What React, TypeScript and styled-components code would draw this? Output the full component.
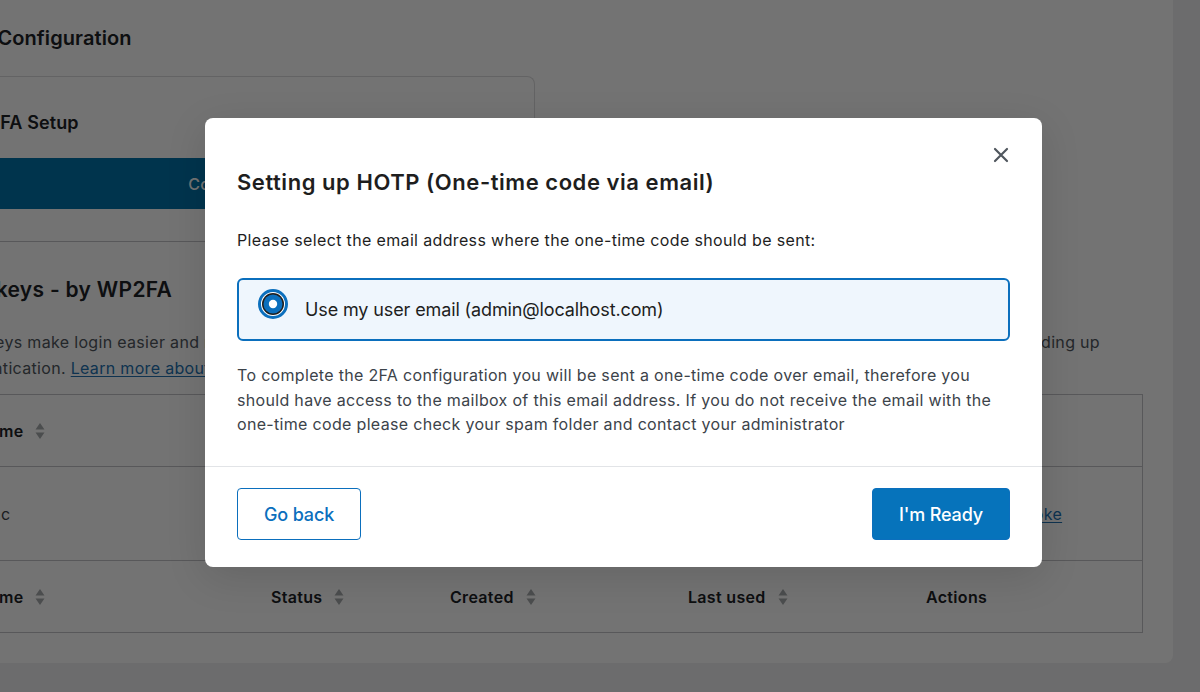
import React from "react";
import styled, { createGlobalStyle } from "styled-components";

const GlobalStyle = createGlobalStyle`
  html, body { margin: 0; padding: 0; }
  body {
    background: #f0f0f1;
    font-family: Inter, "Noto Sans", "Liberation Sans", sans-serif;
    letter-spacing: 0.32px;
    overflow: hidden;
    -webkit-font-smoothing: antialiased;
  }
  * { box-sizing: border-box; }
`;

const Page = styled.div`
  position: relative;
  height: 692px;
  overflow: hidden;
`;

const Panel = styled.main`
  margin: -16px 27px 0 -90px;
  padding: 40px 30px 30px 45px;
  background: #ffffff;
  border-radius: 0 8px 8px 0;
  color: #1d2327;
`;

const PageTitle = styled.h1`
  margin: 0;
  font-size: 20px;
  line-height: 28px;
  font-weight: 600;
  letter-spacing: 0.1px;
  color: #1d2327;
`;

const Card = styled.section`
  margin-top: 24px;
  width: 580px;
  border: 1px solid #dcdcde;
  border-bottom-color: #c3c4c7;
  border-radius: 0 8px 0 0;
  padding-bottom: 32px;
`;

const CardTitle = styled.h2`
  margin: 0;
  padding: 33px 33px 0;
  font-size: 18px;
  line-height: 26px;
  font-weight: 600;
  letter-spacing: 0.1px;
`;

const Bar = styled.div`
  margin-top: 22px;
  height: 51px;
  background: #0073aa;
  color: #ffffff;
  display: flex;
  align-items: center;
  justify-content: center;
  font-size: 16px;
  font-weight: 500;
`;

const SectionTitle = styled.h2`
  margin: 34px 0 0 -9px;
  font-size: 21px;
  line-height: 28px;
  font-weight: 600;
  letter-spacing: 0.3px;
`;

const Desc = styled.div`
  margin: 25px 0 0 -6px;
  font-size: 16px;
  line-height: 26px;
  color: #50575e;
`;

const DescLine = styled.div`
  display: flex;
  justify-content: space-between;
  padding-right: 43px;
  white-space: nowrap;
`;

const Link = styled.a`
  color: #2271b1;
  text-decoration: underline;
  text-underline-offset: 2px;
`;

const Table = styled.div`
  margin-top: 13px;
  border: 1px solid #c3c4c7;
`;

const Row = styled.div<{ $h: number; $last?: boolean }>`
  display: grid;
  grid-template-columns: 294px 179px 238px 238px 1fr;
  height: ${(p) => p.$h}px;
  border-bottom: ${(p) => (p.$last ? "none" : "1px solid #c3c4c7")};
  align-items: center;
`;

const HeadCell = styled.div`
  display: flex;
  align-items: center;
  gap: 12px;
  padding: 0 21px;
  font-size: 16px;
  font-weight: 600;
  color: #1d2327;
`;

const Cell = styled.div`
  display: flex;
  align-items: center;
  gap: 16px;
  padding: 0 21px;
  font-size: 16px;
  color: #3c434a;
`;

const SortIcon = () => (
  <svg width="10" height="20" viewBox="0 0 10 20" aria-hidden>
    <path d="M0.5 8.5 L5 2 L9.5 8.5 Z" fill="#a7aaad" />
    <path d="M0.5 11.5 L9.5 11.5 L5 18 Z" fill="#a7aaad" />
  </svg>
);

const Overlay = styled.div`
  position: absolute;
  inset: 0;
  background: rgba(0, 0, 0, 0.55);
  display: flex;
  align-items: flex-start;
  justify-content: center;
  padding: 118px 0 0 47px;
`;

const Modal = styled.div`
  position: relative;
  width: 837px;
  background: #ffffff;
  border-radius: 8px;
  box-shadow: 0 10px 40px rgba(0, 0, 0, 0.12);
  color: #1e1e1e;
`;

const CloseButton = styled.button`
  position: absolute;
  top: 25px;
  right: 29px;
  width: 24px;
  height: 24px;
  padding: 0;
  border: none;
  background: none;
  display: flex;
  align-items: center;
  justify-content: center;
  cursor: pointer;
`;

const ModalBody = styled.div`
  padding: 50px 32px 29.5px;
`;

const ModalTitle = styled.h2`
  margin: 0;
  font-size: 22px;
  line-height: 28px;
  font-weight: 600;
  letter-spacing: 0.55px;
  color: #1e1e1e;
`;

const Lead = styled.p`
  margin: 32px 0 0;
  font-size: 16px;
  line-height: 24px;
  letter-spacing: 0.35px;
  color: #1e1e1e;
`;

const Option = styled.label`
  margin-top: 26px;
  height: 63px;
  display: flex;
  align-items: center;
  gap: 17px;
  padding: 0 19px;
  border: 2px solid #0b6fbd;
  border-radius: 6px;
  background: #eff6fd;
  font-size: 18px;
  letter-spacing: -0.12px;
  color: #1e1e1e;
  cursor: pointer;
`;

const RadioMark = styled.span`
  display: flex;
  margin-bottom: 11px;
`;

const Note = styled.p`
  margin: 22px 0 0;
  font-size: 16px;
  line-height: 24.5px;
  color: #3c434a;
`;

const Divider = styled.hr`
  margin: 0;
  border: none;
  border-top: 1px solid #e2e4e7;
`;

const Footer = styled.div`
  display: flex;
  justify-content: space-between;
  padding: 21px 32px 27px;
`;

const Button = styled.button<{ $primary?: boolean }>`
  height: 52px;
  padding: 0 26px;
  border-radius: 4px;
  font-family: inherit;
  font-size: 18px;
  font-weight: 500;
  letter-spacing: -0.15px;
  cursor: pointer;
  border: 1px solid #0b6fbd;
  background: ${(p) => (p.$primary ? "#0673bb" : "#ffffff")};
  color: ${(p) => (p.$primary ? "#ffffff" : "#0b6fbd")};
`;

const columns = ["Name", "Status", "Created", "Last used", "Actions"];

const HeaderRow = ({ h, last }: { h: number; last?: boolean }) => (
  <Row $h={h} $last={last}>
    {columns.map((c) => (
      <HeadCell key={c}>
        {c}
        {c !== "Actions" && <SortIcon />}
      </HeadCell>
    ))}
  </Row>
);

export default function App() {
  return (
    <>
      <GlobalStyle />
      <Page>
        <Panel>
          <PageTitle>2FA Configuration</PageTitle>
          <Card>
            <CardTitle>2FA Setup</CardTitle>
            <Bar>Configure 2FA</Bar>
          </Card>
          <SectionTitle>Passkeys - by WP2FA</SectionTitle>
          <Desc>
            <DescLine>
              <span>Passkeys make login easier and more secure by letting users sign in</span>
              <span>with biometrics or a device PIN, speeding up</span>
            </DescLine>
            <div>
              authentication. <Link href="#">Learn more about passkeys</Link>
            </div>
          </Desc>
          <Table>
            <HeaderRow h={72} />
            <Row $h={94}>
              <Cell>Mac</Cell>
              <Cell>Active</Cell>
              <Cell>2024-05-14</Cell>
              <Cell>Never</Cell>
              <Cell>
                <Link href="#">Rename</Link>
                <Link href="#">Revoke</Link>
              </Cell>
            </Row>
            <HeaderRow h={71} last />
          </Table>
        </Panel>

        <Overlay>
          <Modal role="dialog" aria-modal="true">
            <CloseButton aria-label="Close">
              <svg width="16" height="16" viewBox="0 0 16 16">
                <path d="M2 2 L14 14 M14 2 L2 14" stroke="#50575e" strokeWidth="2.2" strokeLinecap="round" />
              </svg>
            </CloseButton>
            <ModalBody>
              <ModalTitle>Setting up HOTP (One-time code via email)</ModalTitle>
              <Lead>Please select the email address where the one-time code should be sent:</Lead>
              <Option>
                <RadioMark>
                  <svg width="30" height="30" viewBox="0 0 30 30">
                    <circle cx="15" cy="15" r="13.5" fill="#ffffff" stroke="#0b6fbd" strokeWidth="3" />
                    <circle cx="15" cy="15" r="11" fill="#1e1e1e" />
                    <circle cx="15" cy="15" r="9.5" fill="#0b6fbd" />
                    <circle cx="15" cy="15" r="4.2" fill="#ffffff" />
                  </svg>
                </RadioMark>
                Use my user email (admin@localhost.com)
              </Option>
              <Note>
                To complete the 2FA configuration you will be sent a one-time code over email, therefore you
                should have access to the mailbox of this email address. If you do not receive the email with the
                one-time code please check your spam folder and contact your administrator
              </Note>
            </ModalBody>
            <Divider />
            <Footer>
              <Button>Go back</Button>
              <Button $primary>I'm Ready</Button>
            </Footer>
          </Modal>
        </Overlay>
      </Page>
    </>
  );
}
